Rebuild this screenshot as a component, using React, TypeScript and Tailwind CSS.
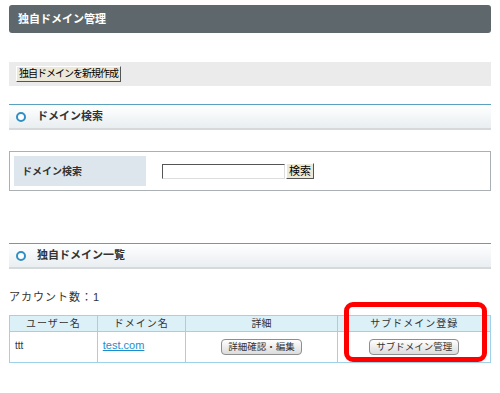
import React from 'react';

const font = { fontFamily: '"Liberation Sans", "Noto Sans CJK JP", sans-serif' };

const SectionHeader: React.FC<{ title: string }> = ({ title }) => (
  <div className="mx-[9px] h-[26px] flex items-center gap-[11px] pl-[7px] border-t border-t-[#5aa0bf] border-b-2 border-b-[#d6d9db] bg-gradient-to-b from-white to-[#e9eef1]">
    <span className="w-[10px] h-[10px] rounded-full border-[2.5px] border-[#2f8fc4] bg-white" />
    <span className="text-[11px] font-bold text-[#333]">{title}</span>
  </div>
);

const RoundButton: React.FC<{ label: string }> = ({ label }) => (
  <button className="h-[16px] px-[6px] rounded-[4px] border border-[#8e8e8e] bg-gradient-to-b from-white to-[#dcdcdc] text-[9.5px] leading-none text-[#333]">
    {label}
  </button>
);

export default function App() {
  return (
    <div className="w-[500px] h-[393px] bg-white relative overflow-hidden" style={font}>
      <div className="pt-[5px]">
        <div className="mx-[9px] h-[28px] rounded-[3px] bg-[#5e686c] flex items-center pl-[9px]">
          <span className="text-[11px] font-bold text-white">独自ドメイン管理</span>
        </div>
      </div>

      <div className="mt-[29px] mx-[9px] h-[24px] bg-[#ebebeb] flex items-center pl-[7px]">
        <button className="h-[16px] px-[2px] bg-[#ece9d8] border border-t-white border-l-white border-r-[#555] border-b-[#555] text-[10px] tracking-[-1px] leading-none text-black">
          独自ドメインを新規作成
        </button>
      </div>

      <div className="mt-[18px]">
        <SectionHeader title="ドメイン検索" />
      </div>

      <div className="mt-[21px] mx-[9px] h-[40px] border border-[#aab0b3] p-[4px] flex">
        <div className="w-[132px] bg-[#dde6ec] flex items-center pl-[8px]">
          <span className="text-[10px] font-bold text-[#333]">ドメイン検索</span>
        </div>
        <div className="flex items-center pl-[16px]">
          <input className="w-[123px] h-[15px] border border-t-[#555] border-l-[#555] border-r-[#ddd] border-b-[#ddd] bg-white" />
          <button className="h-[16px] px-[2px] ml-[1px] bg-[#ece9d8] border border-t-white border-l-white border-r-[#555] border-b-[#555] text-[11px] leading-none text-black">
            検索
          </button>
        </div>
      </div>

      <div className="mt-[52px]">
        <SectionHeader title="独自ドメイン一覧" />
      </div>

      <div className="mt-[20px] mx-[9px] text-[11px] text-[#333] tracking-[1px]">アカウント数：1</div>

      <table className="mt-[9px] ml-[9px] w-[482px] border-collapse text-[10px] text-[#333]">
        <thead>
          <tr className="bg-[#dcf0f8] h-[16px]">
            <th className="w-[88px] border border-[#9fd1e8] font-normal tracking-[1px]">ユーザー名</th>
            <th className="w-[88px] border border-[#9fd1e8] font-normal tracking-[1px]">ドメイン名</th>
            <th className="w-[153px] border border-[#9fd1e8] font-normal">詳細</th>
            <th className="w-[153px] border border-[#9fd1e8] font-normal tracking-[1px]">サブドメイン登録</th>
          </tr>
        </thead>
        <tbody>
          <tr className="h-[31px]">
            <td className="border border-[#9fd1e8] align-top pl-[5px] pt-[6px]">ttt</td>
            <td className="border border-[#9fd1e8] align-top pl-[5px] pt-[5px]">
              <a href="#" className="text-[11px] text-[#1a8fce] underline">test.com</a>
            </td>
            <td className="border border-[#9fd1e8] text-center">
              <RoundButton label="詳細確認・編集" />
            </td>
            <td className="border border-[#9fd1e8] text-center">
              <RoundButton label="サブドメイン管理" />
            </td>
          </tr>
        </tbody>
      </table>

      <div className="absolute left-[344px] top-[302px] w-[143px] h-[60px] border-[5px] border-[#ff0000] rounded-[9px]" />
    </div>
  );
}
